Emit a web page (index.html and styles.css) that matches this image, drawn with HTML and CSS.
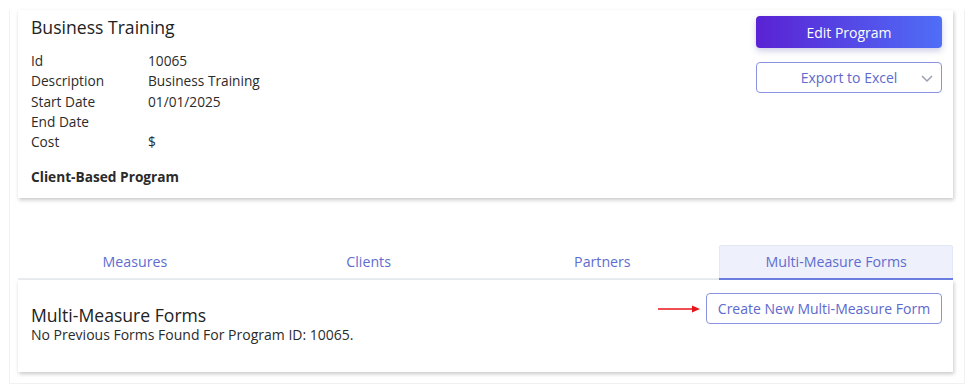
FILE: index.html
```html
<!DOCTYPE html>
<html lang="en">
<head>
    <meta charset="UTF-8">
    <title>Business Training - Program</title>
    <link rel="stylesheet" href="styles.css">
</head>
<body>
    <div class="page">
        <!-- 项目信息 -->
        <div class="card program">
            <div class="info">
                <div class="title">Business Training</div>
                <div class="fields">
                    <div class="label">Id</div><div>10065</div>
                    <div class="label">Description</div><div>Business Training</div>
                    <div class="label">Start Date</div><div>01/01/2025</div>
                    <div class="label">End Date</div><div></div>
                    <div class="label">Cost</div><div>$</div>
                </div>
                <div class="type">Client-Based Program</div>
            </div>
            <div class="actions">
                <div class="btn primary">Edit Program</div>
                <div class="btn outline select">
                    <span>Export to Excel</span>
                    <svg class="chevron" width="14" height="14" viewBox="0 0 14 14">
                        <path d="M2 5l5 5 5-5" fill="none" stroke="#9aa0b4" stroke-width="1.5"/>
                    </svg>
                </div>
            </div>
        </div>

        <!-- 标签页 -->
        <div class="tabs">
            <div class="tab">Measures</div>
            <div class="tab">Clients</div>
            <div class="tab">Partners</div>
            <div class="tab active">Multi-Measure Forms</div>
        </div>

        <div class="card forms">
            <div class="info">
                <div class="title">Multi-Measure Forms</div>
                <div class="empty">No Previous Forms Found For Program ID: 10065.</div>
            </div>
            <div class="create">
                <svg class="arrow" width="42" height="8" viewBox="0 0 42 8">
                    <line x1="0" y1="4" x2="36" y2="4" stroke="#e8141a" stroke-width="1.5"/>
                    <path d="M34 0.5L42 4 34 7.5z" fill="#e8141a"/>
                </svg>
                <div class="btn outline">Create New Multi-Measure Form</div>
            </div>
        </div>
    </div>
</body>
</html>
```

FILE: styles.css
```css
body {
    margin: 0;
    background-color: #ffffff;
    font-family: "Open Sans", "Liberation Sans", sans-serif;
    color: #2b2b2b;
}

.page {
    margin: 10px 10px 0 9px;
    width: 935px;
    height: 373px;
    border: 1px solid #f1f1f1;
    border-top: 0;
    padding: 0 11px 0 8px;
}

.card {
    background-color: #ffffff;
    box-shadow: 1px 2px 4px rgba(0, 0, 0, .22);
    display: flex;
    justify-content: space-between;
    align-items: flex-start;
}
.card .title {
    font-size: 17.6px;
    line-height: 24px;
    color: #222222;
}

.program {
    padding: 5px 11px 11px 13px;
    margin-top: 1px;
}
.program .fields {
    display: grid;
    grid-template-columns: 117px auto;
    grid-auto-rows: 20.3px;
    font-size: 13.7px;
    line-height: 20px;
    margin-top: 12px;
}
.program .type {
    font-size: 13.7px;
    font-weight: 700;
    line-height: 20px;
    margin-top: 15px;
}

.actions {
    display: flex;
    flex-direction: column;
    gap: 14px;
    margin-top: 1px;
}

.btn {
    width: 186px;
    height: 32px;
    box-sizing: border-box;
    border-radius: 4px;
    font-size: 14px;
    display: flex;
    align-items: center;
    justify-content: center;
    user-select: none;
    cursor: default;
}
.btn.primary {
    color: #ffffff;
    background: linear-gradient(90deg, #5a22d4, #4f6ef7);
    box-shadow: 0 3px 6px rgba(60, 60, 160, .25);
}
.btn.outline {
    color: #5d69cc;
    border: 1px solid #8a93e2;
    background-color: #ffffff;
}
.btn.select {
    height: 31px;
    position: relative;
}
.btn.select .chevron {
    position: absolute;
    right: 7px;
    top: 8px;
}

.tabs {
    display: flex;
    margin-top: 47px;
    border-bottom: 2px solid #ebeff1;
}
.tab {
    flex: 1;
    height: 33px;
    line-height: 33px;
    text-align: center;
    font-size: 14.2px;
    color: #5e6dcf;
    margin-bottom: -2px;
    border-bottom: 2px solid transparent;
}
.tab.active {
    background-color: #eef0fb;
    border-radius: 3px 3px 0 0;
    border-bottom-color: #6a7ce0;
    box-shadow: inset 0 1px 0 #e4e7f5, inset 1px 0 0 #e4e7f5, inset -1px 0 0 #e4e7f5;
}

.forms {
    height: 92px;
    box-sizing: border-box;
    padding: 13px 11px 0 13px;
}
.forms .info {
    margin-top: 11px;
}
.forms .title {
    line-height: 22px;
}
.forms .empty {
    font-size: 14px;
    line-height: 18px;
}

.create {
    display: flex;
    align-items: center;
    gap: 6px;
}
.create .btn {
    width: 236px;
    height: 31px;
}
```
